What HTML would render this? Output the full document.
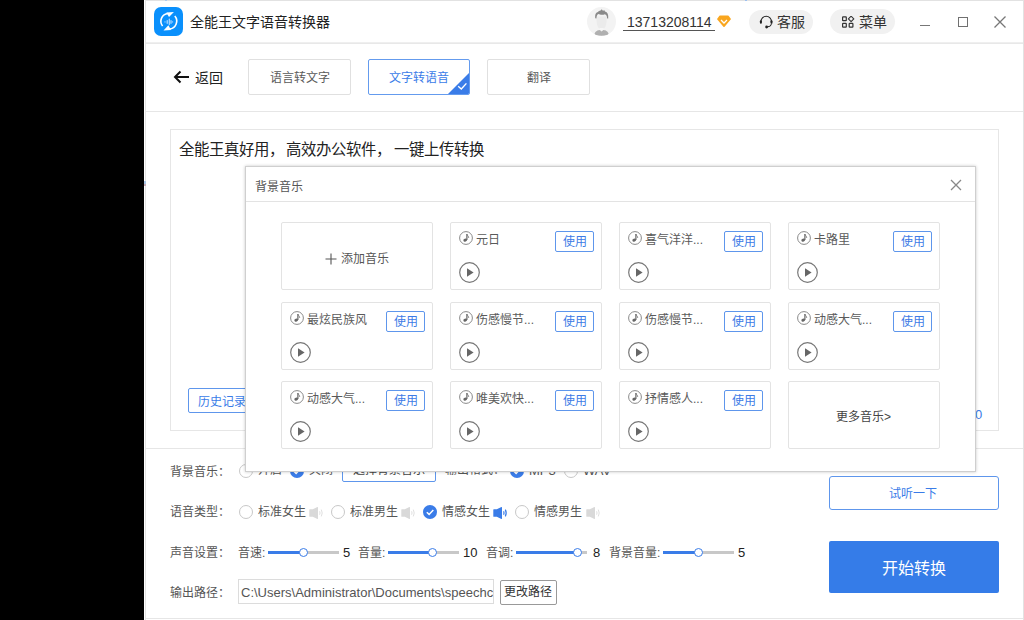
<!DOCTYPE html>
<html lang="zh-CN"><head><meta charset="utf-8">
<style>
*{box-sizing:border-box;margin:0;padding:0}
html,body{width:1024px;height:620px;overflow:hidden;background:#000}
body{font-family:"Liberation Sans",sans-serif;color:#333;position:relative}
.a{position:absolute}
.t{position:absolute;white-space:nowrap;line-height:1}
.ln{position:absolute;background:#e6e6e6}
.tab{position:absolute;top:59px;width:103px;height:36px;border:1px solid #e0e0e0;border-radius:2px;font-size:12px;color:#5a5a5a;text-align:center;line-height:37px}
.card{position:absolute;width:152px;height:68px;border:1px solid #e3e3e3;border-radius:2px;background:#fff}
.use{position:absolute;left:104px;top:8px;width:39px;height:21px;border:1px solid #5e96ec;border-radius:2px;color:#3d7be6;font-size:12px;line-height:20px;text-align:center}
.cname{position:absolute;left:25px;top:10px;font-size:12px;color:#5a5a5a;line-height:14px;white-space:nowrap}
.note{position:absolute;left:8px;top:7.5px;width:14px;height:14px}
.play{position:absolute;left:8px;top:39px;width:21px;height:21px}
.lbl{position:absolute;font-size:12px;color:#555;line-height:1;white-space:nowrap}
.rad{position:absolute;width:14px;height:14px;border:1px solid #c8c8c8;border-radius:50%;background:#fff}
.radc{position:absolute;width:14px;height:14px}
.spk{position:absolute;width:15px;height:16px}
.trk{position:absolute;height:3px;background:#c8c8c8}
.trkb{position:absolute;height:3px;background:#3a7ce8}
.thumb{position:absolute;width:9px;height:9px;border:1px solid #3a7ce8;border-radius:50%;background:#fff}
</style></head>
<body>
<!-- window -->
<div class="a" style="left:144px;top:0;width:880px;height:620px;background:#fff"></div>
<div class="ln" style="left:145px;top:0;width:879px;height:1px;background:#e2e2e2"></div>
<div class="ln" style="left:145px;top:0;width:1px;height:620px;background:#e2e2e2"></div>
<div class="ln" style="left:1023px;top:0;width:1px;height:620px;background:#e2e2e2"></div>
<div class="a" style="left:165px;top:0;width:2px;height:1px;background:#aecbef"></div>
<div class="a" style="left:745px;top:0;width:2px;height:1px;background:#9cc0f0"></div>

<div class="a" style="left:144px;top:181px;width:2px;height:3px;background:#a9c6e6"></div><div class="a" style="left:144px;top:184px;width:2px;height:2px;background:#c2a8b4"></div>
<!-- header -->
<div class="a" style="left:154px;top:7px;width:29px;height:29px;border-radius:7px;background:#0a90fc">
<svg width="29" height="29" viewBox="0 0 29 29" style="position:absolute;left:0;top:0">
<path d="M8.59 19.05A7.8 7.8 0 0 1 14.0 6.43" fill="none" stroke="#fff" stroke-width="1.6"/>
<path d="M12.3 5.5L19.9 4.9L15.0 10.1Z" fill="#fff"/>
<path d="M20.8 9.1A7.8 7.8 0 0 1 15.4 21.97" fill="none" stroke="#fff" stroke-width="1.6"/>
<path d="M17.1 22.9L9.5 23.5L14.4 18.3Z" fill="#fff"/>
<path d="M11 14.9h0.01M13.2 13.5v2.8M15.3 12.2v5.4M17 13.5v2.8M18.6 14.9h0.01" stroke="#b5dcff" stroke-width="1.2" stroke-linecap="round"/>
</svg></div>
<div class="t" style="left:190px;top:15px;font-size:14px;color:#222">全能王文字语音转换器</div>

<div class="a" style="left:587px;top:7px;width:29px;height:29px;border-radius:50%;background:#f3f3f3;overflow:hidden">
<svg width="29" height="29" viewBox="0 0 29 29" style="position:absolute;left:0;top:0">
<path d="M9.4 9.5C9.4 19 11.2 22.2 14.6 22.2S19.8 19 19.8 9.5Z" fill="#ebebeb"/>
<path d="M12.6 21h4v2.5h-4Z" fill="#f6f6f6"/>
<path d="M7.6 27.4C7.8 24.6 10.4 23.3 12.8 23.1L14.6 24.6L16.4 23.1C18.8 23.3 21.4 24.6 21.6 27.4C19.5 29.2 9.7 29.2 7.6 27.4Z" fill="#b0b0b0"/>
<path d="M8.2 11.2C7.8 8 8.6 5.6 10.8 5C11.5 3.9 12.6 3.6 13.5 3.4L14.8 2.2L15.9 3.8L17.4 3.2L18 4.6C20.6 5.2 21.6 7.6 21.2 11.4L20.2 11.6C20 8.9 19.2 7.6 17.8 7.3C16.3 8.1 13 8 11.4 7.1C10.2 7.6 9.6 9 9.4 11.4Z" fill="#8a8a8a"/>
</svg></div>
<div class="t" style="left:627px;top:15px;font-size:14px;color:#333">13713208114</div>
<div class="a" style="left:623px;top:30px;width:92px;height:1px;background:#555"></div>
<svg class="a" style="left:716.5px;top:15px" width="14" height="13" viewBox="0 0 14 13">
<path d="M3.2 0.4H10.8Q11.3 0.4 11.6 0.8L13.8 3.8Q14 4.2 13.7 4.6L7.6 11.8Q7 12.4 6.4 11.8L0.3 4.6Q0 4.2 0.2 3.8L2.4 0.8Q2.7 0.4 3.2 0.4Z" fill="#f9a61e"/>
<path d="M4 5L7 8L10 5" fill="none" stroke="#fff" stroke-width="1.3"/>
</svg>

<div class="a" style="left:749px;top:10px;width:64px;height:24px;border-radius:12px;background:#f1f1f1"></div>
<svg class="a" style="left:759px;top:15px" width="15" height="15" viewBox="0 0 15 15">
<path d="M1.9 7.2V6.6A5.3 5.3 0 0 1 12.5 6.6V7.2" fill="none" stroke="#222" stroke-width="1.1"/>
<rect x="0.9" y="5.2" width="2" height="3.6" rx="1" fill="#222"/>
<rect x="11.5" y="5.2" width="2" height="3.6" rx="1" fill="#222"/>
<path d="M12.6 8.5Q12.4 11.8 8.2 12" fill="none" stroke="#222" stroke-width="1"/>
<circle cx="7.6" cy="12" r="1.4" fill="#222"/>
</svg>
<div class="t" style="left:777px;top:15px;font-size:14px;color:#333">客服</div>

<div class="a" style="left:830px;top:9px;width:65px;height:25px;border-radius:12.5px;background:#f1f1f1"></div>
<svg class="a" style="left:842px;top:16px" width="13" height="13" viewBox="0 0 13 13">
<rect x="0.6" y="0.9" width="3.7" height="3.8" rx="0.5" fill="none" stroke="#333" stroke-width="1.2"/>
<path d="M9.1 0.2L11.8 2.9L9.1 5.6L6.4 2.9Z" fill="none" stroke="#333" stroke-width="1.1" stroke-linejoin="round"/>
<rect x="0.6" y="7.4" width="3.7" height="3.8" rx="0.5" fill="none" stroke="#333" stroke-width="1.2"/>
<rect x="7.2" y="7.4" width="3.7" height="3.8" rx="0.5" fill="none" stroke="#333" stroke-width="1.2"/>
</svg>
<div class="t" style="left:859px;top:15px;font-size:14px;color:#333">菜单</div>

<div class="a" style="left:920px;top:25px;width:10px;height:1px;background:#777"></div>
<div class="a" style="left:958px;top:17px;width:10px;height:10px;border:1.3px solid #707070"></div>
<svg class="a" style="left:993px;top:15px" width="14" height="14" viewBox="0 0 14 14">
<path d="M1.5 1.5L12.5 12.5M12.5 1.5L1.5 12.5" stroke="#777" stroke-width="1.3"/>
</svg>
<div class="ln" style="left:146px;top:42px;width:877px;height:1px;background:#efefef"></div><div class="ln" style="left:146px;top:43px;width:877px;height:1px;background:#e8e8e8"></div>

<!-- tab row -->
<svg class="a" style="left:173px;top:70px" width="17" height="14" viewBox="0 0 17 14">
<path d="M16 7H2M7.5 1.5L2 7L7.5 12.5" fill="none" stroke="#111" stroke-width="2"/>
</svg>
<div class="t" style="left:195px;top:71px;font-size:14px;color:#222">返回</div>
<div class="tab" style="left:248px">语言转文字</div>
<div class="tab" style="left:368px;width:102px;border-color:#649bee;color:#3a7ce8;overflow:hidden">文字转语音
<svg style="position:absolute;right:0;bottom:0" width="21" height="21" viewBox="0 0 21 21">
<path d="M21 0V21H0Z" fill="#3a7ce8"/>
<path d="M10.2 13.3L13.3 16L18.4 10.4" fill="none" stroke="#fff" stroke-width="1.4"/>
</svg></div>
<div class="tab" style="left:487px">翻译</div>
<div class="ln" style="left:146px;top:111px;width:877px;height:1px"></div>

<!-- text area -->
<div class="a" style="left:170px;top:129px;width:829px;height:302px;border:1px solid #e6e6e6"></div>
<div class="t" style="left:179px;top:142px;font-size:15.4px;color:#222">全能王真好用，</div><div class="t" style="left:285.5px;top:142px;font-size:15.4px;color:#222">高效办公软件，</div><div class="t" style="left:394px;top:142px;font-size:15.4px;color:#222">一键上传转换</div>
<div class="a" style="left:188px;top:388px;width:80px;height:25px;border:1px solid #5e96ec;border-radius:2px"></div>
<div class="t" style="left:198px;top:395.5px;font-size:12px;color:#3a7ce8">历史记录</div>
<div class="t" style="left:975px;top:408px;font-size:13px;color:#3a7ce8">0</div>

<div class="ln" style="left:146px;top:448px;width:877px;height:1px"></div>

<!-- settings row 1 -->
<div class="lbl" style="left:170px;top:466px">背景音乐：</div>
<div class="rad" style="left:239px;top:464px"></div>
<div class="lbl" style="left:258px;top:464px">开启</div>
<svg class="radc" style="left:290px;top:464px" viewBox="0 0 14 14"><circle cx="7" cy="7" r="7" fill="#3a7ce8"/><path d="M3.8 7.2L6.1 9.4L10.3 4.9" fill="none" stroke="#fff" stroke-width="1.5"/></svg>
<div class="lbl" style="left:309px;top:464px">关闭</div>
<div class="a" style="left:342px;top:458px;width:94px;height:24px;border:1px solid #5e96ec;border-radius:2px"></div>
<div class="lbl" style="left:353px;top:464px;color:#444">选择背景音乐</div>
<div class="lbl" style="left:445px;top:464px">输出格式：</div>
<svg class="radc" style="left:510px;top:464px" viewBox="0 0 14 14"><circle cx="7" cy="7" r="7" fill="#3a7ce8"/><path d="M3.8 7.2L6.1 9.4L10.3 4.9" fill="none" stroke="#fff" stroke-width="1.5"/></svg>
<div class="lbl" style="left:529px;top:464px;font-size:13px">MP3</div>
<div class="rad" style="left:564px;top:464px"></div>
<div class="lbl" style="left:583px;top:464px;font-size:13px">WAV</div>

<!-- settings row 2 -->
<div class="lbl" style="left:170px;top:506px">语音类型：</div>
<div class="rad" style="left:239px;top:505px"></div>
<div class="lbl" style="left:258px;top:506px">标准女生</div>
<svg class="spk" style="left:309px;top:505px" viewBox="0 0 15 16"><path d="M0.3 4.7Q0.3 4.2 0.8 4.2H3.8L8.4 2.0Q9 1.8 9 2.4V13.6Q9 14.2 8.4 14L3.8 11.8H0.8Q0.3 11.8 0.3 11.3Z" fill="#d9d9d9"/><path d="M10.6 6.3Q11.5 8 10.6 9.7M12.3 4.6Q14.1 8 12.3 11.4" fill="none" stroke="#e0e0e0" stroke-width="1"/></svg>
<div class="rad" style="left:331px;top:505px"></div>
<div class="lbl" style="left:350px;top:506px">标准男生</div>
<svg class="spk" style="left:401px;top:505px" viewBox="0 0 15 16"><path d="M0.3 4.7Q0.3 4.2 0.8 4.2H3.8L8.4 2.0Q9 1.8 9 2.4V13.6Q9 14.2 8.4 14L3.8 11.8H0.8Q0.3 11.8 0.3 11.3Z" fill="#d9d9d9"/><path d="M10.6 6.3Q11.5 8 10.6 9.7M12.3 4.6Q14.1 8 12.3 11.4" fill="none" stroke="#e0e0e0" stroke-width="1"/></svg>
<svg class="radc" style="left:423px;top:505px" viewBox="0 0 14 14"><circle cx="7" cy="7" r="7" fill="#3a7ce8"/><path d="M3.8 7.2L6.1 9.4L10.3 4.9" fill="none" stroke="#fff" stroke-width="1.5"/></svg>
<div class="lbl" style="left:442px;top:506px">情感女生</div>
<svg class="spk" style="left:493px;top:505px" viewBox="0 0 15 16"><path d="M0.3 4.7Q0.3 4.2 0.8 4.2H3.8L8.4 2.0Q9 1.8 9 2.4V13.6Q9 14.2 8.4 14L3.8 11.8H0.8Q0.3 11.8 0.3 11.3Z" fill="#3a7ce8"/><path d="M10.6 6.3Q11.5 8 10.6 9.7M12.3 4.6Q14.1 8 12.3 11.4" fill="none" stroke="#3a7ce8" stroke-width="1.2"/></svg>
<div class="rad" style="left:515px;top:505px"></div>
<div class="lbl" style="left:534px;top:506px">情感男生</div>
<svg class="spk" style="left:586px;top:505px" viewBox="0 0 15 16"><path d="M0.3 4.7Q0.3 4.2 0.8 4.2H3.8L8.4 2.0Q9 1.8 9 2.4V13.6Q9 14.2 8.4 14L3.8 11.8H0.8Q0.3 11.8 0.3 11.3Z" fill="#d9d9d9"/><path d="M10.6 6.3Q11.5 8 10.6 9.7M12.3 4.6Q14.1 8 12.3 11.4" fill="none" stroke="#e0e0e0" stroke-width="1"/></svg>

<!-- settings row 3 -->
<div class="lbl" style="left:170px;top:547px">声音设置：</div>
<div class="lbl" style="left:238px;top:547px">音速:</div>
<div class="trk" style="left:268px;top:551px;width:71px"></div>
<div class="trkb" style="left:268px;top:551px;width:36px"></div>
<div class="thumb" style="left:299px;top:548px"></div>
<div class="lbl" style="left:343px;top:546px;font-size:13px;color:#222">5</div>
<div class="lbl" style="left:358px;top:547px">音量:</div>
<div class="trk" style="left:388px;top:551px;width:71px"></div>
<div class="trkb" style="left:388px;top:551px;width:45px"></div>
<div class="thumb" style="left:428px;top:548px"></div>
<div class="lbl" style="left:463px;top:546px;font-size:13px;color:#222">10</div>
<div class="lbl" style="left:486px;top:547px">音调:</div>
<div class="trk" style="left:516px;top:551px;width:71px"></div>
<div class="trkb" style="left:516px;top:551px;width:62px"></div>
<div class="thumb" style="left:573px;top:548px"></div>
<div class="lbl" style="left:593px;top:546px;font-size:13px;color:#222">8</div>
<div class="lbl" style="left:609px;top:547px">背景音量:</div>
<div class="trk" style="left:663px;top:551px;width:71px"></div>
<div class="trkb" style="left:663px;top:551px;width:36px"></div>
<div class="thumb" style="left:694px;top:548px"></div>
<div class="lbl" style="left:738px;top:546px;font-size:13px;color:#222">5</div>

<!-- settings row 4 -->
<div class="lbl" style="left:170px;top:587px">输出路径：</div>
<div class="a" style="left:238px;top:579px;width:256px;height:25px;border:1px solid #dcdcdc;overflow:hidden">
<div class="t" style="left:2px;top:6px;font-size:13px;color:#555">C:\Users\Administrator\Documents\speechconvert</div></div>
<div class="a" style="left:500px;top:580px;width:57px;height:25px;border:1px solid #999;border-radius:2px"></div>
<div class="lbl" style="left:504px;top:586px;color:#333">更改路径</div>

<div class="ln" style="left:146px;top:618px;width:877px;height:1px"></div>

<!-- right buttons -->
<div class="a" style="left:829px;top:476px;width:170px;height:34px;border:1px solid #5e96ec;border-radius:3px"></div>
<div class="t" style="left:889px;top:488px;font-size:12px;color:#3a7ce8">试听一下</div>
<div class="a" style="left:829px;top:541px;width:170px;height:52px;border-radius:2px;background:#357ce8"></div>
<div class="t" style="left:882px;top:561px;font-size:16px;color:#fff">开始转换</div>

<!-- dialog -->
<div class="a" style="left:245px;top:166px;width:731px;height:306px;background:#fff;border:1px solid #cfcfcf;box-shadow:0 0 3px rgba(0,0,0,0.22)">
</div>
<div class="t" style="left:255px;top:180.5px;font-size:12px;color:#555">背景音乐</div>
<svg class="a" style="left:949.5px;top:179px" width="12" height="12" viewBox="0 0 12 12">
<path d="M1 1L11 11M11 1L1 11" stroke="#888" stroke-width="1.3"/>
</svg>
<div class="ln" style="left:246px;top:201px;width:729px;height:1px;background:#e3e3e3"></div>
<div class="card" style="left:281px;top:222px"><svg style="position:absolute;left:43px;top:30px" width="12" height="12" viewBox="0 0 12 12"><path d="M6 0.5V11.5M0.5 6H11.5" stroke="#555" stroke-width="1.1"/></svg><div class="t" style="left:59px;top:29.5px;font-size:12px;color:#555">添加音乐</div></div><div class="card" style="left:450px;top:222px"><svg class="note" viewBox="0 0 14 14"><circle cx="7" cy="7" r="6.4" fill="none" stroke="#8a8a8a" stroke-width="1"/><path d="M7.9 2.9v6.2" stroke="#666" stroke-width="1.2" fill="none"/><ellipse cx="6.2" cy="9.1" rx="1.9" ry="1.4" transform="rotate(-20 6.2 9.1)" fill="#666"/><path d="M7.9 3.1c0.3 1.6 1.9 2 1.8 3.8" stroke="#777" stroke-width="0.9" fill="none"/></svg><div class="cname">元日</div><div class="use">使用</div><svg class="play" viewBox="0 0 21 21"><circle cx="10.5" cy="10.5" r="9.8" fill="none" stroke="#777" stroke-width="1.2"/><path d="M8 6.2L14.6 10.5L8 14.8Z" fill="#666"/></svg></div><div class="card" style="left:619px;top:222px"><svg class="note" viewBox="0 0 14 14"><circle cx="7" cy="7" r="6.4" fill="none" stroke="#8a8a8a" stroke-width="1"/><path d="M7.9 2.9v6.2" stroke="#666" stroke-width="1.2" fill="none"/><ellipse cx="6.2" cy="9.1" rx="1.9" ry="1.4" transform="rotate(-20 6.2 9.1)" fill="#666"/><path d="M7.9 3.1c0.3 1.6 1.9 2 1.8 3.8" stroke="#777" stroke-width="0.9" fill="none"/></svg><div class="cname">喜气洋洋...</div><div class="use">使用</div><svg class="play" viewBox="0 0 21 21"><circle cx="10.5" cy="10.5" r="9.8" fill="none" stroke="#777" stroke-width="1.2"/><path d="M8 6.2L14.6 10.5L8 14.8Z" fill="#666"/></svg></div><div class="card" style="left:788px;top:222px"><svg class="note" viewBox="0 0 14 14"><circle cx="7" cy="7" r="6.4" fill="none" stroke="#8a8a8a" stroke-width="1"/><path d="M7.9 2.9v6.2" stroke="#666" stroke-width="1.2" fill="none"/><ellipse cx="6.2" cy="9.1" rx="1.9" ry="1.4" transform="rotate(-20 6.2 9.1)" fill="#666"/><path d="M7.9 3.1c0.3 1.6 1.9 2 1.8 3.8" stroke="#777" stroke-width="0.9" fill="none"/></svg><div class="cname">卡路里</div><div class="use">使用</div><svg class="play" viewBox="0 0 21 21"><circle cx="10.5" cy="10.5" r="9.8" fill="none" stroke="#777" stroke-width="1.2"/><path d="M8 6.2L14.6 10.5L8 14.8Z" fill="#666"/></svg></div><div class="card" style="left:281px;top:302px"><svg class="note" viewBox="0 0 14 14"><circle cx="7" cy="7" r="6.4" fill="none" stroke="#8a8a8a" stroke-width="1"/><path d="M7.9 2.9v6.2" stroke="#666" stroke-width="1.2" fill="none"/><ellipse cx="6.2" cy="9.1" rx="1.9" ry="1.4" transform="rotate(-20 6.2 9.1)" fill="#666"/><path d="M7.9 3.1c0.3 1.6 1.9 2 1.8 3.8" stroke="#777" stroke-width="0.9" fill="none"/></svg><div class="cname">最炫民族风</div><div class="use">使用</div><svg class="play" viewBox="0 0 21 21"><circle cx="10.5" cy="10.5" r="9.8" fill="none" stroke="#777" stroke-width="1.2"/><path d="M8 6.2L14.6 10.5L8 14.8Z" fill="#666"/></svg></div><div class="card" style="left:450px;top:302px"><svg class="note" viewBox="0 0 14 14"><circle cx="7" cy="7" r="6.4" fill="none" stroke="#8a8a8a" stroke-width="1"/><path d="M7.9 2.9v6.2" stroke="#666" stroke-width="1.2" fill="none"/><ellipse cx="6.2" cy="9.1" rx="1.9" ry="1.4" transform="rotate(-20 6.2 9.1)" fill="#666"/><path d="M7.9 3.1c0.3 1.6 1.9 2 1.8 3.8" stroke="#777" stroke-width="0.9" fill="none"/></svg><div class="cname">伤感慢节...</div><div class="use">使用</div><svg class="play" viewBox="0 0 21 21"><circle cx="10.5" cy="10.5" r="9.8" fill="none" stroke="#777" stroke-width="1.2"/><path d="M8 6.2L14.6 10.5L8 14.8Z" fill="#666"/></svg></div><div class="card" style="left:619px;top:302px"><svg class="note" viewBox="0 0 14 14"><circle cx="7" cy="7" r="6.4" fill="none" stroke="#8a8a8a" stroke-width="1"/><path d="M7.9 2.9v6.2" stroke="#666" stroke-width="1.2" fill="none"/><ellipse cx="6.2" cy="9.1" rx="1.9" ry="1.4" transform="rotate(-20 6.2 9.1)" fill="#666"/><path d="M7.9 3.1c0.3 1.6 1.9 2 1.8 3.8" stroke="#777" stroke-width="0.9" fill="none"/></svg><div class="cname">伤感慢节...</div><div class="use">使用</div><svg class="play" viewBox="0 0 21 21"><circle cx="10.5" cy="10.5" r="9.8" fill="none" stroke="#777" stroke-width="1.2"/><path d="M8 6.2L14.6 10.5L8 14.8Z" fill="#666"/></svg></div><div class="card" style="left:788px;top:302px"><svg class="note" viewBox="0 0 14 14"><circle cx="7" cy="7" r="6.4" fill="none" stroke="#8a8a8a" stroke-width="1"/><path d="M7.9 2.9v6.2" stroke="#666" stroke-width="1.2" fill="none"/><ellipse cx="6.2" cy="9.1" rx="1.9" ry="1.4" transform="rotate(-20 6.2 9.1)" fill="#666"/><path d="M7.9 3.1c0.3 1.6 1.9 2 1.8 3.8" stroke="#777" stroke-width="0.9" fill="none"/></svg><div class="cname">动感大气...</div><div class="use">使用</div><svg class="play" viewBox="0 0 21 21"><circle cx="10.5" cy="10.5" r="9.8" fill="none" stroke="#777" stroke-width="1.2"/><path d="M8 6.2L14.6 10.5L8 14.8Z" fill="#666"/></svg></div><div class="card" style="left:281px;top:381px"><svg class="note" viewBox="0 0 14 14"><circle cx="7" cy="7" r="6.4" fill="none" stroke="#8a8a8a" stroke-width="1"/><path d="M7.9 2.9v6.2" stroke="#666" stroke-width="1.2" fill="none"/><ellipse cx="6.2" cy="9.1" rx="1.9" ry="1.4" transform="rotate(-20 6.2 9.1)" fill="#666"/><path d="M7.9 3.1c0.3 1.6 1.9 2 1.8 3.8" stroke="#777" stroke-width="0.9" fill="none"/></svg><div class="cname">动感大气...</div><div class="use">使用</div><svg class="play" viewBox="0 0 21 21"><circle cx="10.5" cy="10.5" r="9.8" fill="none" stroke="#777" stroke-width="1.2"/><path d="M8 6.2L14.6 10.5L8 14.8Z" fill="#666"/></svg></div><div class="card" style="left:450px;top:381px"><svg class="note" viewBox="0 0 14 14"><circle cx="7" cy="7" r="6.4" fill="none" stroke="#8a8a8a" stroke-width="1"/><path d="M7.9 2.9v6.2" stroke="#666" stroke-width="1.2" fill="none"/><ellipse cx="6.2" cy="9.1" rx="1.9" ry="1.4" transform="rotate(-20 6.2 9.1)" fill="#666"/><path d="M7.9 3.1c0.3 1.6 1.9 2 1.8 3.8" stroke="#777" stroke-width="0.9" fill="none"/></svg><div class="cname">唯美欢快...</div><div class="use">使用</div><svg class="play" viewBox="0 0 21 21"><circle cx="10.5" cy="10.5" r="9.8" fill="none" stroke="#777" stroke-width="1.2"/><path d="M8 6.2L14.6 10.5L8 14.8Z" fill="#666"/></svg></div><div class="card" style="left:619px;top:381px"><svg class="note" viewBox="0 0 14 14"><circle cx="7" cy="7" r="6.4" fill="none" stroke="#8a8a8a" stroke-width="1"/><path d="M7.9 2.9v6.2" stroke="#666" stroke-width="1.2" fill="none"/><ellipse cx="6.2" cy="9.1" rx="1.9" ry="1.4" transform="rotate(-20 6.2 9.1)" fill="#666"/><path d="M7.9 3.1c0.3 1.6 1.9 2 1.8 3.8" stroke="#777" stroke-width="0.9" fill="none"/></svg><div class="cname">抒情感人...</div><div class="use">使用</div><svg class="play" viewBox="0 0 21 21"><circle cx="10.5" cy="10.5" r="9.8" fill="none" stroke="#777" stroke-width="1.2"/><path d="M8 6.2L14.6 10.5L8 14.8Z" fill="#666"/></svg></div><div class="card" style="left:788px;top:381px"><div class="t" style="left:47px;top:29px;font-size:12px;color:#444">更多音乐&gt;</div></div>
</body></html>
